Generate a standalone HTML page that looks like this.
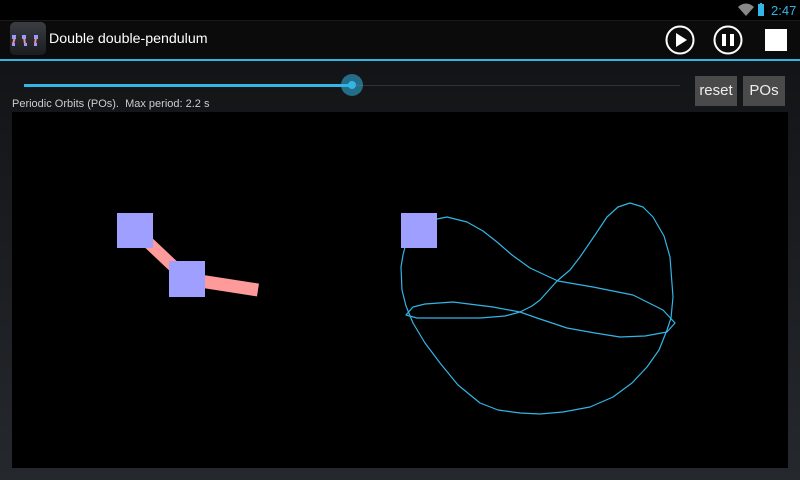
<!DOCTYPE html>
<html><head><style>
body{margin:0;width:800px;height:480px;overflow:hidden;background:linear-gradient(#101113,#25282d);font-family:"Liberation Sans",sans-serif;position:relative}
.abs{position:absolute}
.btn{position:absolute;top:76px;height:30px;background:#4a4a4a;color:#eee;font-size:15px;line-height:30px;text-align:center}
</style></head><body>
<div class="abs" style="left:0;top:0;width:800px;height:20px;background:#000"></div>
<div class="abs" style="left:0;top:20px;width:800px;height:39px;background:#0b0b0c;border-top:1px solid #1a1a1a"></div>
<div class="abs" style="left:0;top:59px;width:800px;height:2px;background:#33b5e5"></div>
<svg class="abs" style="left:736px;top:2px" width="64" height="16">
<path d="M2 5 A11 11 0 0 1 18 5 L10 14 Z" fill="#888"/>
<rect x="22" y="2" width="6" height="12" fill="#33b5e5"/><rect x="24" y="1" width="2" height="1" fill="#33b5e5"/>
<text x="35" y="13" fill="#33b5e5" font-size="13" font-family="Liberation Sans">2:47</text>
</svg>
<div class="abs" style="left:10px;top:22px;width:36px;height:33px;border-radius:5px;background:linear-gradient(#3a3d42,#1c1d20)"></div>
<svg class="abs" style="left:10px;top:22px" width="36" height="33">
<path d="M5 15 L3 22 M14 15 L15 22 M26 15 L25 22" stroke="#f88" stroke-width="2"/>
<rect x="2" y="13" width="4" height="4" fill="#99f"/><rect x="12" y="13" width="4" height="4" fill="#99f"/><rect x="24" y="13" width="4" height="4" fill="#99f"/>
<rect x="2" y="21" width="3" height="3" fill="#99f"/><rect x="14" y="21" width="3" height="3" fill="#99f"/><rect x="24" y="21" width="3" height="3" fill="#99f"/>
</svg>
<div class="abs" style="left:49px;top:31px;color:#fff;font-size:14.2px">Double double-pendulum</div>
<svg class="abs" style="left:660px;top:22px" width="140" height="36">
<circle cx="20" cy="18" r="13.5" fill="none" stroke="#fff" stroke-width="2"/>
<path d="M16 11 L27 18 L16 25 Z" fill="#fff"/>
<circle cx="68" cy="18" r="13.5" fill="none" stroke="#fff" stroke-width="2"/>
<rect x="62" y="12" width="4" height="12" fill="#fff"/><rect x="70" y="12" width="4" height="12" fill="#fff"/>
<rect x="105" y="7" width="22" height="22" fill="#fff"/>
</svg>
<div class="abs" style="left:24px;top:85px;width:656px;height:1px;background:#333"></div>
<div class="abs" style="left:24px;top:84px;width:328px;height:3px;background:#33b5e5"></div>
<div class="abs" style="left:341px;top:74px;width:22px;height:22px;border-radius:50%;background:rgba(51,181,229,0.55)"></div>
<div class="abs" style="left:348px;top:81px;width:8px;height:8px;border-radius:50%;background:#33b5e5"></div>
<div class="btn" style="left:695px;width:42px">reset</div>
<div class="btn" style="left:743px;width:42px">POs</div>
<div class="abs" style="left:12px;top:98px;color:#ccc;font-size:11px">Periodic Orbits (POs).&nbsp; Max period: 2.2 s</div>
<svg class="abs" style="left:12px;top:112px" width="776" height="356">
<rect width="776" height="356" fill="#000"/>
<g transform="translate(-12,-112)">
<line x1="135" y1="230" x2="187" y2="279" stroke="#ff9a9a" stroke-width="12"/>
<line x1="187" y1="279" x2="258" y2="290" stroke="#ff9a9a" stroke-width="13"/>
<rect x="117" y="213" width="36" height="35" fill="#9f9fff"/>
<rect x="169" y="261" width="36" height="36" fill="#9f9fff"/>
<polyline fill="none" stroke="#33b5e5" stroke-width="1.2" stroke-linejoin="round" points="437,219 447,217 467,222 483,231 497,242 512,255 530,268 558,281 593,287 633,295 663,310 675,323 667,332 645,336 620,337 595,333 567,328 537,318 520,312 493,307 453,302 425,304 413,307 406,315 417,318 450,318 480,318 505,316 520,312 532,306 540,300 557,281 570,270 580,257 595,235 607,217 618,207 630,203 643,207 653,217 664,236 670,257 673,297 671,318 667,330 659,350 647,367 632,383 613,397 590,407 563,412 540,414 520,413 498,410 480,403 458,385 440,363 425,343 413,323 406,306 402,290 401,267 403,255 405,247"/>
<rect x="401" y="213" width="36" height="35" fill="#9f9fff"/>
</g>
</svg>
</body></html>
